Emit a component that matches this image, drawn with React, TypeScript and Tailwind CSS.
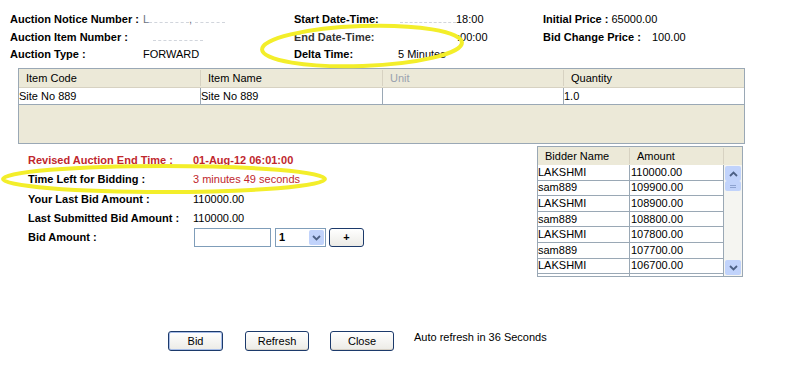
import React from 'react';

const bids = [
  ['LAKSHMI', '110000.00'],
  ['sam889', '109900.00'],
  ['LAKSHMI', '108900.00'],
  ['sam889', '108800.00'],
  ['LAKSHMI', '107800.00'],
  ['sam889', '107700.00'],
  ['LAKSHMI', '106700.00'],
  ['sam889', '106600.00'],
];

const Masked = ({ w }: { w: string }) => (
  <span className={`inline-block ${w} border-b border-dashed border-gray-300 h-[6px] align-middle`}></span>
);

const XpButton = ({ label, w, def }: { label: string; w: string; def?: boolean }) => (
  <button className={`${w} h-[20px] rounded-[3px] border ${def ? 'border-[#1c3a6b] shadow-[inset_0_0_0_1px_#a7bde8]' : 'border-[#1c3a6b] shadow-[inset_0_-1px_0_#d6d0c5]'} bg-gradient-to-b from-white to-[#ecebe6] text-[11px] text-black`}>
    {label}
  </button>
);

export default function App() {
  return (
    <div className="relative w-[802px] h-[367px] bg-white overflow-hidden text-[11px] text-black whitespace-nowrap" style={{ fontFamily: '"Liberation Sans", Arial, sans-serif' }}>
      {/* Header details */}
      <div className="flex pl-[10px] pt-[11px] leading-[17.5px] h-[68px]">
        <div className="w-[284px] flex flex-col">
          <div className="flex items-center">
            <span className="font-bold">Auction Notice Number :</span>
            <span className="ml-1 text-gray-500">L<Masked w="w-[40px]" />, <Masked w="w-[30px]" /></span>
          </div>
          <div className="flex items-center">
            <span className="font-bold w-[133px]">Auction Item Number :</span>
            <span className="ml-[10px]"><Masked w="w-[50px]" /></span>
          </div>
          <div className="flex items-center">
            <span className="font-bold w-[133px]">Auction Type :</span>
            <span>FORWARD</span>
          </div>
        </div>
        <div className="w-[249px] flex flex-col">
          <div className="flex items-center">
            <span className="font-bold w-[106px]">Start Date-Time:</span>
            <Masked w="w-[56px]" />
            <span>18:00</span>
          </div>
          <div className="flex items-center">
            <span className="font-bold w-[106px] text-[#333]">End Date-Time:</span>
            <span className="w-[57px]"></span>
            <span>:00:00</span>
          </div>
          <div className="flex items-center">
            <span className="font-bold w-[104px]">Delta Time:</span>
            <span>5 Minutes</span>
          </div>
        </div>
        <div className="flex flex-col">
          <div><span className="font-bold">Initial Price :</span> 65000.00</div>
          <div className="flex">
            <span className="font-bold w-[109px]">Bid Change Price :</span>
            <span>100.00</span>
          </div>
        </div>
      </div>

      {/* Items table */}
      <div className="ml-[18px] w-[727px] h-[76px] border border-[#9aa8b5] bg-[#ece9d8]">
        <div className="flex h-[19px] items-center border-b border-[#d7d2c2]">
          <div className="w-[182px] pl-[7px] border-r border-[#d7d2c2]">Item Code</div>
          <div className="w-[182px] pl-[7px] border-r border-[#d7d2c2]">Item Name</div>
          <div className="w-[181px] pl-[7px] border-r border-[#d7d2c2] text-gray-400">Unit</div>
          <div className="flex-1 pl-[7px]">Quantity</div>
        </div>
        <div className="flex h-[17px] items-center bg-white border-b border-[#9aa8b5]">
          <div className="w-[182px] h-full flex items-center border-r border-[#9aa8b5]">Site No 889</div>
          <div className="w-[182px] h-full flex items-center border-r border-[#9aa8b5]">Site No 889</div>
          <div className="w-[181px] h-full border-r border-[#9aa8b5]"></div>
          <div className="flex-1 h-full flex items-center">1.0</div>
        </div>
      </div>

      {/* Bidding section */}
      <div className="flex mt-[1px]">
        <div className="pl-[28px] pt-[6px] w-[537px] leading-[19.3px]">
          <div className="flex text-[#c0272d] font-bold">
            <span className="w-[165px]">Revised Auction End Time :</span>
            <span>01-Aug-12 06:01:00</span>
          </div>
          <div className="flex">
            <span className="w-[165px] font-bold">Time Left for Bidding :</span>
            <span className="text-[#c0272d]">3 minutes 49 seconds</span>
          </div>
          <div className="flex">
            <span className="w-[165px] font-bold">Your Last Bid Amount :</span>
            <span>110000.00</span>
          </div>
          <div className="flex">
            <span className="w-[165px] font-bold">Last Submitted Bid Amount :</span>
            <span>110000.00</span>
          </div>
          <div className="flex items-center">
            <span className="w-[166px] font-bold">Bid Amount :</span>
            <div className="w-[77px] h-[19px] border border-[#7f9db9] bg-white"></div>
            <div className="ml-[4px] w-[51px] h-[19px] border border-[#7f9db9] bg-white flex items-center justify-between pl-[3px] pr-[1px]">
              <span className="font-bold">1</span>
              <span className="w-[15px] h-[15px] bg-[#c1d3fb] rounded-[2px] flex items-center justify-center">
                <svg width="9" height="6" viewBox="0 0 9 6"><path d="M1 1 L4.5 4.5 L8 1" stroke="#4d6185" strokeWidth="1.8" fill="none" /></svg>
              </span>
            </div>
            <button className="ml-[3px] w-[35px] h-[19px] rounded-[3px] border border-[#1c3a6b] bg-gradient-to-b from-white to-[#ecebe6] font-bold leading-none">+</button>
          </div>
        </div>

        {/* Bidder list */}
        <div className="mt-[1px] w-[206px] h-[131px] border border-[#9aa8b5] bg-white flex overflow-hidden">
          <div className="flex-1 flex flex-col">
            <div className="flex h-[18px] items-center bg-[#ece9d8] shrink-0">
              <div className="w-[92px] pl-[7px] border-r border-[#d7d2c2]">Bidder Name</div>
              <div className="w-[94px] pl-[7px] border-r border-[#d7d2c2]">Amount</div>
            </div>
            {bids.map(([name, amt], i) => (
              <div key={i} className="flex h-[15.6px] shrink-0 items-center border-b border-[#9aa8b5] leading-none">
                <div className="w-[92px] h-full flex items-center border-r border-[#9aa8b5]">{name}</div>
                <div className="w-[94px] h-full flex items-center pl-[1px] border-r border-[#9aa8b5]">{amt}</div>
              </div>
            ))}
          </div>
          <div className="w-[18px] flex flex-col bg-[#ece9d8]">
            <div className="h-[18px] shrink-0"></div>
            <div className="flex-1 bg-[#f5f5f1] flex flex-col">
              <div className="h-[15px] mx-[1px] mt-[1px] bg-[#c1d3fb] rounded-[2px] flex items-center justify-center">
                <svg width="9" height="6" viewBox="0 0 9 6"><path d="M1 5 L4.5 1.5 L8 5" stroke="#4d6185" strokeWidth="1.8" fill="none" /></svg>
              </div>
              <div className="h-[10px] mx-[1px] bg-[#c1d3fb] rounded-[2px] flex flex-col items-center justify-center gap-[1px]">
                <span className="w-[6px] h-px bg-[#8ea3d0]"></span>
                <span className="w-[6px] h-px bg-[#8ea3d0]"></span>
              </div>
              <div className="flex-1"></div>
              <div className="h-[15px] mx-[1px] mb-[1px] bg-[#c1d3fb] rounded-[2px] flex items-center justify-center">
                <svg width="9" height="6" viewBox="0 0 9 6"><path d="M1 1 L4.5 4.5 L8 1" stroke="#4d6185" strokeWidth="1.8" fill="none" /></svg>
              </div>
            </div>
          </div>
        </div>
      </div>

      {/* Buttons */}
      <div className="flex items-center mt-[54px] pl-[168px]">
        <XpButton label="Bid" w="w-[55px]" def />
        <span className="w-[22px]"></span>
        <XpButton label="Refresh" w="w-[64px]" />
        <span className="w-[21px]"></span>
        <XpButton label="Close" w="w-[64px]" />
        <span className="ml-[20px] -mt-[8px]">Auto refresh in 36 Seconds</span>
      </div>

      {/* Yellow annotation ellipses */}
      <svg className="absolute left-0 top-0 pointer-events-none" width="802" height="367">
        <ellipse cx="362" cy="46" rx="100" ry="20" fill="none" stroke="#f3ee2a" strokeWidth="4" transform="rotate(-2 362 46)" />
        <ellipse cx="164" cy="179" rx="161" ry="13" fill="none" stroke="#f3ee2a" strokeWidth="4" />
      </svg>
    </div>
  );
}
